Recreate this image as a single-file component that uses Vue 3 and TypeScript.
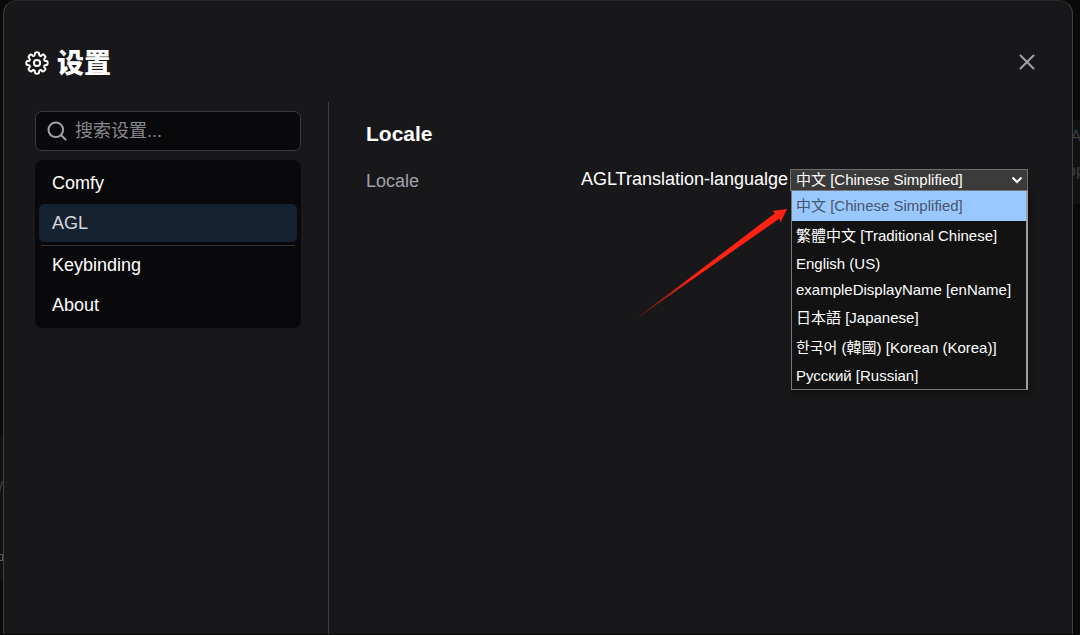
<script setup lang="ts">
import { ref } from 'vue'

interface Locale {
  id: string
  label: string
  tall: boolean
}

const categories = [
  { name: 'Comfy', divided: false },
  { name: 'AGL', divided: true },
  { name: 'Keybinding', divided: false },
  { name: 'About', divided: false },
]

const locales: Locale[] = [
  { id: 'zh-CN', label: '中文 [Chinese Simplified]', tall: true },
  { id: 'zh-TW', label: '繁體中文 [Traditional Chinese]', tall: true },
  { id: 'en-US', label: 'English (US)', tall: false },
  { id: 'example', label: 'exampleDisplayName [enName]', tall: false },
  { id: 'ja', label: '日本語 [Japanese]', tall: true },
  { id: 'ko', label: '한국어 (韓國) [Korean (Korea)]', tall: true },
  { id: 'ru', label: 'Русский [Russian]', tall: false },
]

const category = ref('AGL')
const locale = ref('zh-CN')
const query = ref('')

// Outline of an eight-toothed cog with softened corners, centred on 0,0.
function cogPath(): string {
  const points: [number, number][] = []
  for (let i = 0; i < 8; i++) {
    for (const [offset, radius] of [[-14, 7.9], [-12, 10.9], [12, 10.9], [14, 7.9]]) {
      const angle = ((i * 45 + offset) * Math.PI) / 180
      points.push([radius * Math.cos(angle), radius * Math.sin(angle)])
    }
  }
  const mid = (a: [number, number], b: [number, number]) =>
    `${((a[0] + b[0]) / 2).toFixed(2)} ${((a[1] + b[1]) / 2).toFixed(2)}`
  let d = `M${mid(points[points.length - 1], points[0])}`
  points.forEach((p, i) => {
    d += `Q${p[0].toFixed(2)} ${p[1].toFixed(2)} ${mid(p, points[(i + 1) % points.length])}`
  })
  return d + 'Z'
}
</script>

<template>
  <div class="page">
    <div class="backdrop" aria-hidden="true">
      <div class="strip left">
        <span class="slash">/</span>
        <span class="knob"></span>
      </div>
      <div class="strip right"><span>A</span><span>op</span></div>
    </div>

    <section class="dialog" role="dialog" aria-labelledby="title">
      <header class="header">
        <svg class="cog" viewBox="-12 -12 24 24" aria-hidden="true">
          <path :d="cogPath()" />
          <circle r="3.1" />
        </svg>
        <h1 id="title">设置</h1>
        <button class="close" type="button" aria-label="Close">
          <svg viewBox="0 0 16 16" aria-hidden="true"><path d="M1.5 1.5l13 13M14.5 1.5l-13 13" /></svg>
        </button>
      </header>

      <div class="body">
        <aside class="sidebar">
          <label class="search">
            <svg viewBox="0 0 20 20" aria-hidden="true">
              <circle cx="8.8" cy="8.8" r="7.3" />
              <path d="M14 14l4.6 4.6" />
            </svg>
            <input v-model="query" type="text" placeholder="搜索设置..." aria-label="搜索设置" />
          </label>
          <nav class="menu">
            <button
              v-for="item in categories"
              :key="item.name"
              type="button"
              :class="{ active: item.name === category, divided: item.divided }"
              @click="category = item.name"
            >
              <span>{{ item.name }}</span>
            </button>
          </nav>
        </aside>

        <main class="content">
          <h2>Locale</h2>
          <div class="row">
            <span class="name">Locale</span>
            <div class="field">
              <label for="locale">AGLTranslation-langualge</label>
              <div class="picker">
                <select id="locale" v-model="locale">
                  <option v-for="l in locales" :key="l.id" :value="l.id">{{ l.label }}</option>
                </select>
                <svg class="chevron" viewBox="0 0 12 8" aria-hidden="true"><path d="M1.5 1.5L6 6l4.500-4.500" /></svg>
                <ul class="options" role="listbox" aria-label="Locale">
                  <li
                    v-for="l in locales"
                    :key="l.id"
                    role="option"
                    :aria-selected="l.id === locale"
                    :class="{ tall: l.tall, selected: l.id === locale }"
                    @click="locale = l.id"
                  >
                    {{ l.label }}
                  </li>
                </ul>
                <svg class="arrow" viewBox="0 0 156 114" aria-hidden="true">
                  <defs>
                    <linearGradient id="fade" gradientUnits="userSpaceOnUse" x1="0" y1="113" x2="60" y2="70">
                      <stop offset="0" stop-color="#ff2112" stop-opacity="0.3" />
                      <stop offset="1" stop-color="#ff2112" />
                    </linearGradient>
                  </defs>
                  <path fill="url(#fade)" d="M0 112L142 4.200L139.500 2L154 0L147.500 13.500L146.500 9.500Z" />
                </svg>
              </div>
            </div>
          </div>
        </main>
      </div>
    </section>
  </div>
</template>

<style>
html,
body {
  background: #09090a;
}
</style>

<style scoped>
.page {
  position: relative;
  display: flex;
  box-sizing: border-box;
  min-height: 100vh;
  padding: 0 7px 1px 3px;
  overflow: hidden;
  color: #fff;
  font-family: "Liberation Sans", "Noto Sans CJK SC", sans-serif;
  font-size: 18px;
}

.backdrop {
  position: absolute;
  inset: 0;
  color: #3c3c3e;
}

.strip {
  position: absolute;
  overflow: hidden;
}

.strip.left {
  left: 0;
  top: 436px;
  width: 3px;
  height: 144px;
  background: #111112;
}

.slash {
  position: absolute;
  right: 0;
  top: 42px;
}

.knob {
  position: absolute;
  right: 0;
  top: 118px;
  width: 6px;
  height: 5px;
  border: 1px solid #5a5a5c;
}

.strip.right {
  right: 0;
  top: 120px;
  display: flex;
  flex-direction: column;
  align-items: center;
  gap: 14px;
  width: 8px;
  height: 84px;
  padding-top: 7px;
  box-sizing: border-box;
  background: #111112;
  font-size: 17px;
  line-height: 20px;
}

.dialog {
  position: relative;
  display: flex;
  flex: 1;
  flex-direction: column;
  min-width: 0;
  border: 1px solid #3f3f42;
  border-top-color: #29292b;
  border-bottom: 0;
  border-radius: 14px 14px 0 0;
  background: #18181a;
}

.header {
  display: flex;
  align-items: center;
  height: 52px;
  padding: 36px 35px 13px 21px;
}

.header svg {
  fill: none;
  stroke: #fff;
}

.cog {
  width: 24px;
  height: 24px;
  stroke-width: 2;
}

h1 {
  margin: 0 auto 0 8px;
  padding-top: 2px;
  font-size: 27px;
  line-height: 36px;
  font-weight: 900;
}

.close {
  display: flex;
  padding: 1px 2px 3px;
  border: 0;
  background: none;
}

.close svg {
  width: 16px;
  height: 16px;
  stroke: #a1a1aa;
  stroke-width: 2;
  stroke-linecap: round;
}

.body {
  display: flex;
  flex: 1;
}

.sidebar {
  display: flex;
  flex-direction: column;
  gap: 9px;
  width: 266px;
  padding: 9px 27px 0 31px;
  border-right: 1px solid #3f3f42;
}

.search {
  display: flex;
  align-items: center;
  gap: 8px;
  box-sizing: border-box;
  height: 40px;
  padding: 0 11px;
  border: 1px solid #3a3a3d;
  border-radius: 7px;
  background: #09090b;
}

.search svg {
  flex: none;
  width: 20px;
  height: 20px;
  fill: none;
  stroke: #a1a1aa;
  stroke-width: 2;
  stroke-linecap: round;
}

.search input {
  flex: 1;
  min-width: 0;
  padding: 0;
  border: 0;
  outline: 0;
  background: none;
  color: #fff;
  font: inherit;
}

.search input::placeholder {
  color: #87878e;
  opacity: 1;
}

.menu {
  display: flex;
  flex-direction: column;
  gap: 2px;
  padding: 4px;
  border-radius: 7px;
  background: #09090b;
}

.menu button {
  height: 38px;
  padding: 0 13px;
  border: 0;
  border-radius: 5px;
  background: none;
  color: #fff;
  font: inherit;
  text-align: left;
}

.menu .active {
  background: #172230;
  color: #d6d9dc;
}

.menu .divided {
  position: relative;
  margin-bottom: 2px;
}

.menu .divided::after {
  position: absolute;
  right: 2px;
  bottom: -4px;
  left: 2px;
  height: 1px;
  background: #343437;
  content: "";
}

.content {
  flex: 1;
  padding: 20px 44px 0 37px;
}

h2 {
  margin: 0 0 12px;
  font-size: 21px;
  line-height: 24px;
  font-weight: 700;
}

.row {
  display: flex;
  align-items: flex-start;
  justify-content: space-between;
  line-height: 22px;
}

.name {
  padding-top: 12px;
  color: #a1a1aa;
}

.field {
  display: flex;
  gap: 2px;
  padding-top: 10px;
}

.picker {
  position: relative;
  padding-top: 1px;
  font-size: 15px;
}

.picker select {
  display: block;
  box-sizing: border-box;
  width: 238px;
  height: 22px;
  padding: 0 5px;
  border: 1px solid #6e6e6e;
  border-radius: 0;
  outline: 0;
  appearance: none;
  background: #3b3b3b;
  color: #fff;
  font: inherit;
  line-height: 20px;
}

.chevron {
  position: absolute;
  top: 8px;
  right: 5px;
  width: 12px;
  height: 8px;
  fill: none;
  stroke: #fff;
  stroke-width: 2;
  pointer-events: none;
}

.options {
  position: absolute;
  top: 22px;
  right: 0;
  left: 1px;
  margin: 0;
  padding: 0;
  border: 1px solid #77797c;
  border-right: 2px solid #a0a0a0;
  background: #121212;
  box-shadow: 2px 3px 6px #0006;
  list-style: none;
}

.options li {
  padding-left: 4px;
  line-height: 26px;
  white-space: nowrap;
}

.options .tall {
  line-height: 30px;
}

.options .selected {
  background: #99c8ff;
  color: #46566b;
}

.arrow {
  position: absolute;
  top: 41px;
  right: 239px;
  width: 156px;
  height: 114px;
}
</style>
